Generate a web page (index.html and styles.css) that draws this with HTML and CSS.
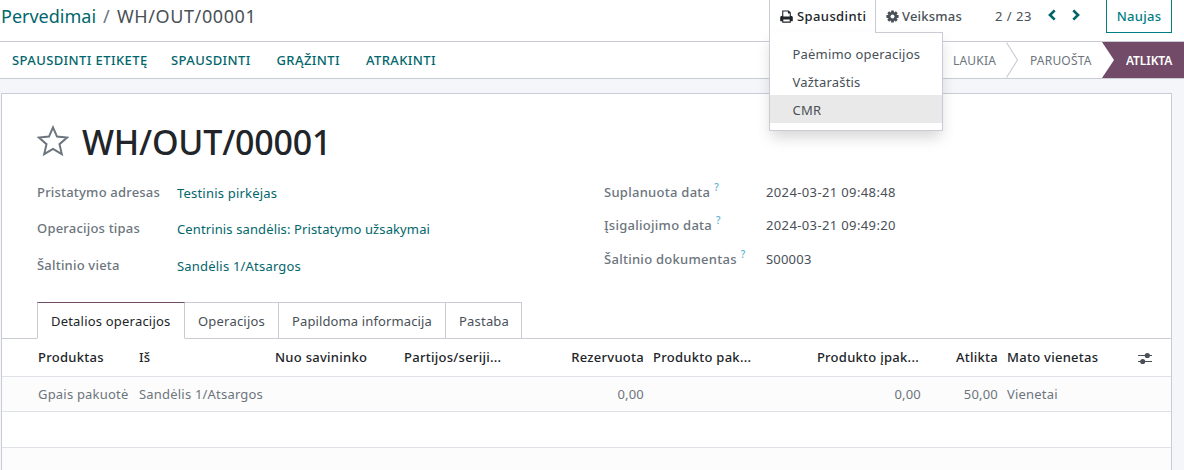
FILE: index.html
```
<!DOCTYPE html>
<html lang="lt">
<head>
<meta charset="utf-8">
<title>WH/OUT/00001</title>
<link rel="stylesheet" href="styles.css">
</head>
<body>
<header class="control-panel">
  <nav class="breadcrumb"><a class="crumb-link">Pervedimai</a><span class="crumb-sep">/</span><span class="crumb-current">WH/OUT/00001</span></nav>
  <div class="print-toggle">
    <svg class="print-icon" viewBox="0 0 13 13"><path fill="#212529" fill-rule="evenodd" d="M2.2 0.5h6.6l2 2v3.3c1.2 0 2 .8 2 1.8v3.2c0 .2-.2.4-.4.4h-1.6v1c0 .4-.2.6-.6.6H2.8c-.4 0-.6-.2-.6-.6v-1H.6c-.2 0-.4-.2-.4-.4V7.600c0-1 .9-1.800 2-1.800zM3.300 1.500v4.900h6.400V3.500H8.500c-.4 0-.6-.2-.6-.6V1.500zM3.300 9.400v2.200h6.400V9.400z"/></svg>
    <span class="print-text">Spausdinti</span>
    <div class="menu">
      <div class="menu-item item-a"><span>Paėmimo operacijos</span></div>
      <div class="menu-item item-b"><span>Važtaraštis</span></div>
      <div class="menu-item active"><span>CMR</span></div>
    </div>
  </div>
  <div class="action-toggle">
    <svg class="gear-icon" viewBox="-6.500 -6.500 13 13"><g fill="#495057"><g id="teeth"><rect x="-1.400" y="-6.100" width="2.800" height="12.200" rx=".4"/><rect x="-6.100" y="-1.400" width="12.200" height="2.800" rx=".4"/></g><use href="#teeth" transform="rotate(45)"/></g><circle r="3.300" fill="none" stroke="#495057" stroke-width="2.600"/><circle r="2" fill="#fff"/></svg>
    <span class="action-text">Veiksmas</span>
  </div>
  <span class="pager">2 / 23</span>
  <svg class="chevron prev" viewBox="0 0 10 12"><path d="M7.700 1.400L3 6l4.700 4.600" fill="none" stroke="#01666b" stroke-width="2.700"/></svg>
  <svg class="chevron next" viewBox="0 0 10 12"><path d="M2.300 1.400L7 6l-4.700 4.600" fill="none" stroke="#01666b" stroke-width="2.700"/></svg>
  <button class="new-button">Naujas</button>
</header>
<div class="statusbar">
  <div class="buttons"><a class="b1">SPAUSDINTI ETIKETĘ</a><a class="b2">SPAUSDINTI</a><a class="b3">GRĄŽINTI</a><a class="b4">ATRAKINTI</a></div>
  <div class="stages">
    <span class="stage s1">LAUKIA</span>
    <svg class="stage-arrow" viewBox="0 0 12 36"><path d="M.5 0.500L11.500 18 .5 35.500" fill="none" stroke="#c9ccd4" stroke-width="1.200"/></svg>
    <span class="stage s2">PARUOŠTA</span>
    <div class="stage-done"><svg class="done-notch" viewBox="0 0 12 36"><path d="M0 0L12 18 0 36z" fill="#fff"/></svg><span class="s3">ATLIKTA</span></div>
  </div>
</div>
<main class="sheet">
  <div class="title-row">
    <svg class="star" viewBox="0 0 32 32"><path d="M16 2.400l4 9.200 10.100.9-7.600 6.700 2.300 9.900L16 23.900l-8.800 5.200 2.300-9.900-7.600-6.700 10.100-.9z" fill="none" stroke="#6c757d" stroke-width="2"/></svg>
    <h1 class="title">WH/OUT/00001</h1>
  </div>
  <div class="fields">
    <dl class="group left">
      <dt><span>Pristatymo adresas</span></dt><dd><span>Testinis pirkėjas</span></dd>
      <dt class="raised"><span>Operacijos tipas</span></dt><dd class="raised-value"><span class="long">Centrinis sandėlis: Pristatymo užsakymai</span></dd>
      <dt><span>Šaltinio vieta</span></dt><dd><span>Sandėlis 1/Atsargos</span></dd>
    </dl>
    <dl class="group right">
      <dt><span>Suplanuota data</span><sup>?</sup></dt><dd><span class="date">2024-03-21 09:48:48</span></dd>
      <dt><span>Įsigaliojimo data</span><sup>?</sup></dt><dd><span class="date">2024-03-21 09:49:20</span></dd>
      <dt><span>Šaltinio dokumentas</span><sup>?</sup></dt><dd><span>S00003</span></dd>
    </dl>
  </div>
  <div class="tabs">
    <div class="tab t1 selected"><span>Detalios operacijos</span></div><div class="tab t2"><span>Operacijos</span></div><div class="tab t3"><span>Papildoma informacija</span></div><div class="tab t4"><span>Pastaba</span></div>
  </div>
  <div class="row head">
    <span>Produktas</span><span>Iš</span><span>Nuo savininko</span><span>Partijos/seriji...</span><span class="num">Rezervuota</span><span>Produkto pak...</span><span class="num packed">Produkto įpak...</span><span class="num">Atlikta</span><span>Mato vienetas</span>
    <svg class="sliders" viewBox="0 0 14 12"><path d="M0 3.500h14M0 9.500h14" stroke="#495057" stroke-width="1.200"/><circle cx="9.300" cy="3.500" r="2.600" fill="#495057"/><circle cx="4.700" cy="9.500" r="2.600" fill="#495057"/></svg>
  </div>
  <div class="row data">
    <span>Gpais pakuotė</span><span>Sandėlis 1/Atsargos</span><span></span><span></span><span class="num">0,00</span><span></span><span class="num">0,00</span><span class="num">50,00</span><span>Vienetai</span>
  </div>
  <div class="row blank"></div>
  <div class="row data"></div>
</main>
</body>
</html>
```
FILE: styles.css
```
* { box-sizing: border-box; }
body { margin: 0; width: 1184px; height: 470px; overflow: hidden; background: #f5f6fa; font: 13px/20px "Noto Sans", "Open Sans", sans-serif; letter-spacing: .2px; color: #495057; white-space: nowrap; }
svg { display: block; flex: none; }
.control-panel { height: 42px; background: #fff; border-bottom: 1px solid #c9ccd4; display: flex; align-items: flex-start; }
.breadcrumb { width: 769px; padding: 4px 0 0 1px; font-size: 18px; line-height: 24px; display: flex; letter-spacing: 0; }
.crumb-link { color: #01666b; width: 102px; }
.crumb-sep { width: 14px; color: #6c757d; }
.crumb-current { letter-spacing: .6px; }
.print-toggle { position: relative; z-index: 2; width: 107px; height: 33px; border: 1px solid #c9ccd4; border-width: 0 1px 0 1px; background: #fff; color: #212529; font-weight: 500; display: flex; padding: 6px 0 0 10px; }
.print-icon { width: 13px; height: 13px; margin: 4px 4px 0 0; }
.menu { position: absolute; z-index: -1; left: -1px; top: 32px; width: 174px; height: 99px; background: #fff; border: 1px solid #c9ccd4; padding-top: 8px; font-weight: 400; color: #495057; box-shadow: 0 8px 14px -2px rgba(0,0,0,.17); }
.menu::before { content: ""; position: absolute; left: 0; top: -1px; width: 105px; height: 1px; background: #fff; }
.menu-item { height: 28px; padding: 3px 0 0 22.500px; line-height: 20px; }
.menu-item.item-a { height: 27px; }
.menu-item.item-b { height: 27px; padding-top: 4px; }
.menu-item.active { background: #e9e9e9; padding-top: 5px; }
.print-text { letter-spacing: .4px; }
.action-toggle { display: flex; width: 119px; padding: 6px 0 0 10px; font-weight: 500; }
.gear-icon { width: 13px; height: 13px; margin: 4px 3px 0 0; }
.pager { padding-top: 6px; width: 51.500px; letter-spacing: .5px; }
.chevron { width: 10px; height: 12px; margin-top: 9px; }
.prev { margin-right: 14px; }
.next { margin-right: 25.500px; }
.new-button { width: 66px; height: 33px; border: 1px solid #017e84; border-top: 0; background: #fff; color: #017e84; font: 500 13px/20px "Noto Sans", sans-serif; letter-spacing: .3px; padding: 0; }
.statusbar { height: 37px; background: #fff; border-bottom: 1px solid #c9ccd4; display: flex; justify-content: space-between; font-size: 13px; line-height: 37px; letter-spacing: .4px; }
.buttons { display: flex; color: #01666b; font-weight: 500; padding-left: 12px; }
.b1 { width: 159px; } .b2 { width: 105.500px; } .b3 { width: 89.500px; }
.stages { display: flex; width: 231px; font-size: 12px; color: #6c757d; letter-spacing: .2px; }
.s1 { width: 53px; }
.stage-arrow { width: 12px; height: 36px; margin-right: 12px; }
.s2 { width: 72px; }
.stage-done { flex: 1; background: #714b67; display: flex; color: #fff; font-weight: 600; letter-spacing: -.1px; }
.done-notch { width: 12px; height: 36px; margin-right: 12px; }
.sheet { margin: 14px 0 0 1px; width: 1171px; height: 400px; background: #fff; border: 1px solid #c9ccd4; }
.title-row { height: 84px; padding: 25px 0 0 35px; display: flex; }
.star { width: 32px; height: 32px; margin: 6px 13px 0 0; }
.title { margin: 0; color: #212529; font-size: 34px; line-height: 46px; font-weight: 500; letter-spacing: -.2px; }
.fields { display: flex; padding-left: 35px; height: 124px; }
.group { margin: 0; display: grid; align-content: start; }
.left { width: 567px; grid-template-columns: 140px 1fr; grid-auto-rows: 36.500px; padding-top: 4px; }
.right { grid-template-columns: 162px 1fr; grid-auto-rows: 33.300px; padding-top: 4px; }
.group dt { font-weight: 500; color: #6c757d; display: flex; }
.group dd { margin: 0; }
.right dt { letter-spacing: .27px; }
.left dd { color: #01666b; padding-top: 1px; }
.left .raised { margin-top: -1px; }
.left .raised-value { padding-top: 0; }
.long { letter-spacing: .12px; }
.date { letter-spacing: .37px; }
sup { font-size: 10px; line-height: 10px; color: #5bb3cf; margin: 0 0 0 4px; }
.tabs { display: flex; height: 37px; padding-left: 35px; border-bottom: 1px solid #c9ccd4; }
.tab { height: 37px; border: 1px solid #c9ccd4; border-left: 0; padding: 8px 0 0 13px; }
.t1 { width: 148px; border-left: 1px solid #c9ccd4; }
.t2 { width: 94px; } .t3 { width: 167px; letter-spacing: .12px; } .t4 { width: 76px; }
.selected { color: #212529; border-top-color: #714b67; border-bottom-color: #fff; }
.row { height: 36px; border-bottom: 1px solid #dee2e6; display: grid; grid-template-columns: 101px 136px 129px 125px 124px 160px 117px 77px 131px 14px; padding-left: 36px; line-height: 34px; }
.head { height: 38px; line-height: 36px; color: #212529; font-weight: 500; letter-spacing: .27px; }
.data { height: 35px; background: #fcfcfc; color: #6c757d; }
.num { text-align: right; padding-right: 9px; }
.num.packed { padding-right: 11px; }
.sliders { width: 14px; height: 12px; margin-top: 13px; }
```
